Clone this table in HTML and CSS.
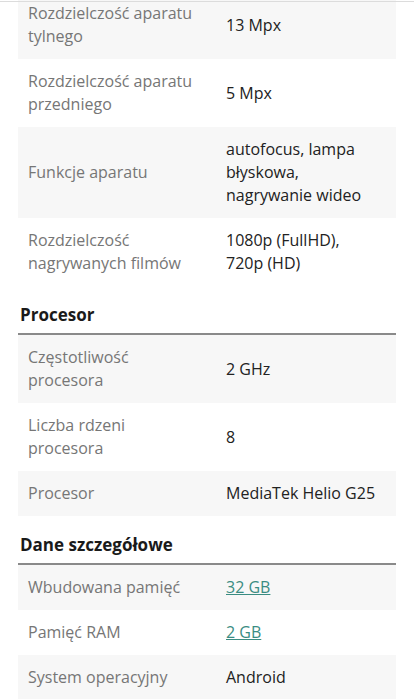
FILE: index.html
```html
<!DOCTYPE html>
<html lang="pl">
<head>
<meta charset="utf-8">
<link rel="stylesheet" href="styles.css">
</head>
<body>
<div class="topline"></div>
<main class="specs">
  <section class="group first">
    <div class="row alt"><div class="label">Rozdzielczość aparatu<br>tylnego</div><div class="value">13 Mpx</div></div>
    <div class="row"><div class="label">Rozdzielczość aparatu<br>przedniego</div><div class="value">5 Mpx</div></div>
    <div class="row alt"><div class="label">Funkcje aparatu</div><div class="value">autofocus, lampa<br>błyskowa,<br>nagrywanie wideo</div></div>
    <div class="row"><div class="label">Rozdzielczość<br>nagrywanych filmów</div><div class="value">1080p (FullHD),<br>720p (HD)</div></div>
  </section>
  <section class="group">
    <h2 class="title">Procesor</h2>
    <div class="row alt"><div class="label">Częstotliwość<br>procesora</div><div class="value">2 GHz</div></div>
    <div class="row"><div class="label">Liczba rdzeni<br>procesora</div><div class="value">8</div></div>
    <div class="row alt"><div class="label">Procesor</div><div class="value">MediaTek Helio G25</div></div>
  </section>
  <section class="group">
    <h2 class="title">Dane szczegółowe</h2>
    <div class="row alt"><div class="label">Wbudowana pamięć</div><div class="value"><a href="#">32 GB</a></div></div>
    <div class="row"><div class="label">Pamięć RAM</div><div class="value"><a href="#">2 GB</a></div></div>
    <div class="row alt"><div class="label">System operacyjny</div><div class="value">Android</div></div>
  </section>
</main>
</body>
</html>
```
FILE: styles.css
```css
html, body {
  margin: 0;
  padding: 0;
  background: #fff;
}
body {
  font-family: "Open Sans", "Noto Sans", sans-serif;
  font-size: 16px;
  color: #222;
  overflow: hidden;
}
.topline {
  position: fixed;
  top: 1px;
  left: 0;
  right: 0;
  height: 1px;
  background: #dcdcdc;
}
.specs {
  margin: -9px 18px 0 18px;
}
.group {
  display: flex;
  flex-direction: column;
}
.title {
  margin: 0;
  padding: 17px 0 6px 2px;
  font-size: 17px;
  font-weight: 700;
  line-height: 24px;
  color: #1a1a1a;
  border-bottom: 2px solid #8a8a8a;
}
.row {
  display: grid;
  grid-template-columns: 198px 1fr;
  align-items: center;
  line-height: 23px;
}
.row.alt {
  background: #f7f7f7;
}
.label, .value {
  padding: 11px 10px;
}
.label {
  color: #767676;
}
.value {
  color: #222;
}
.value a {
  color: #3a8c82;
  text-decoration: underline;
}
```
